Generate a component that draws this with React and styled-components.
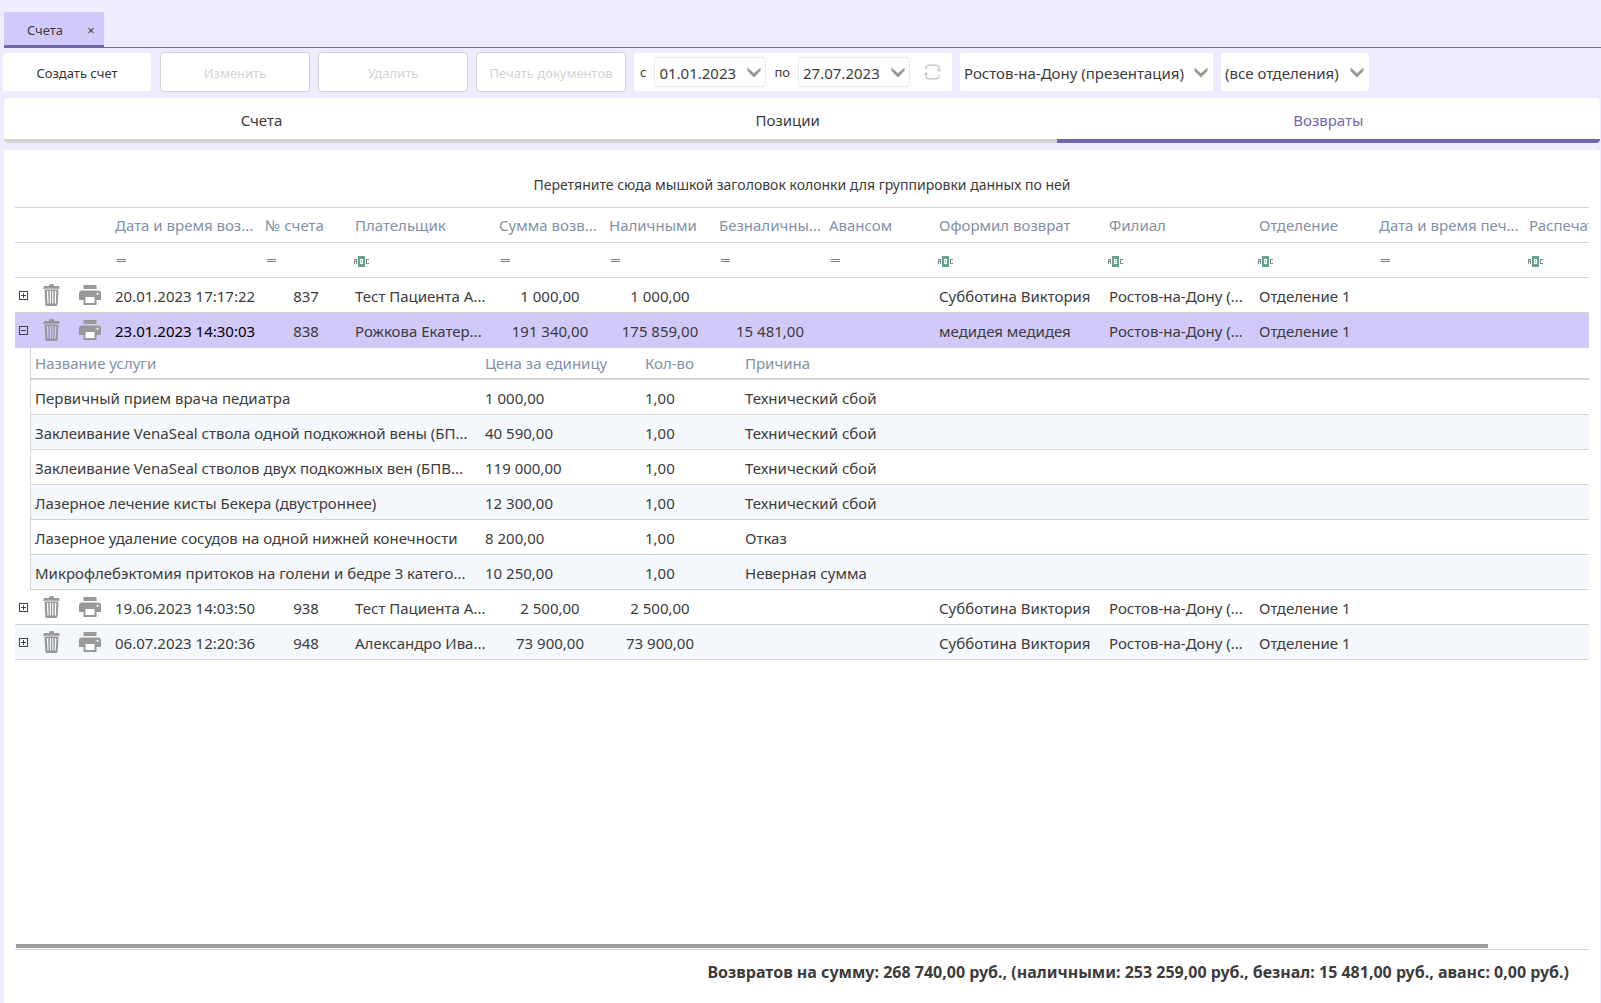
import React, { Fragment, useState } from 'react'
import styled, { createGlobalStyle } from 'styled-components'

const columns = [
    { title: '', label: 'Раскрыть', width: 17 },
    { title: '', label: 'Удаление', width: 38 },
    { title: '', label: 'Печать', width: 40 },
    { title: 'Дата и время воз...', width: 150, filter: 'eq' },
    { title: '№ счета', width: 90, filter: 'eq' },
    { title: 'Плательщик', width: 144, filter: 'abc' },
    { title: 'Сумма возв...', width: 110, filter: 'eq' },
    { title: 'Наличными', width: 110, filter: 'eq' },
    { title: 'Безналичны...', width: 110, filter: 'eq' },
    { title: 'Авансом', width: 110, filter: 'eq' },
    { title: 'Оформил возврат', width: 170, filter: 'abc' },
    { title: 'Филиал', width: 150, filter: 'abc' },
    { title: 'Отделение', width: 120, filter: 'abc' },
    { title: 'Дата и время печ...', width: 150, filter: 'eq' },
    { title: 'Распечатал', width: 174, filter: 'abc' },
]

const refunds = [
    { id: 837, date: '20.01.2023 17:17:22', payer: 'Тест Пациента А...', sum: '1 000,00', cash: '1 000,00', card: '', author: 'Субботина Виктория' },
    { id: 838, date: '23.01.2023 14:30:03', payer: 'Рожкова Екатер...', sum: '191 340,00', cash: '175 859,00', card: '15 481,00', author: 'медидея медидея' },
    { id: 938, date: '19.06.2023 14:03:50', payer: 'Тест Пациента А...', sum: '2 500,00', cash: '2 500,00', card: '', author: 'Субботина Виктория' },
    { id: 948, date: '06.07.2023 12:20:36', payer: 'Александро Ива...', sum: '73 900,00', cash: '73 900,00', card: '', author: 'Субботина Виктория' },
]

const services = [
    ['Первичный прием врача педиатра', '1 000,00', '1,00', 'Технический сбой'],
    ['Заклеивание VenaSeal ствола одной подкожной вены (БП...', '40 590,00', '1,00', 'Технический сбой'],
    ['Заклеивание VenaSeal стволов двух подкожных вен (БПВ...', '119 000,00', '1,00', 'Технический сбой'],
    ['Лазерное лечение кисты Бекера (двустроннее)', '12 300,00', '1,00', 'Технический сбой'],
    ['Лазерное удаление сосудов на одной нижней конечности', '8 200,00', '1,00', 'Отказ'],
    ['Микрофлебэктомия притоков на голени и бедре 3 катего...', '10 250,00', '1,00', 'Неверная сумма'],
]

const Chevron = () => (
    <svg className='chevron' width='14' height='11' viewBox='0 0 14 11' aria-hidden='true'>
        <path d='M0.5 0.5 L7 6.2 L13.5 0.5 V4 L7 10.5 L0.5 4 Z' fill='#999' />
    </svg>
)

const RefreshIcon = () => (
    <svg width='18' height='16' viewBox='0 0 18 16' fill='none' stroke='#cacaca' strokeWidth='1.4' aria-hidden='true'>
        <path d='M2 5.5 V4 Q2 1.2 4.8 1.2 H12.2 Q15 1.2 15 4 V7' />
        <path d='M12.8 5.8 H17.2 L15 7.8 Z' fill='#cacaca' strokeWidth='0.4' />
        <path d='M15 10.5 V12 Q15 14.8 12.2 14.8 H4.8 Q2 14.8 2 12 V9' />
        <path d='M0 10.2 H4.2 L2.1 8.2 Z' fill='#cacaca' strokeWidth='0.4' />
    </svg>
)

const TrashIcon = () => (
    <svg width='17' height='22' viewBox='0 0 17 22' fill='#999' aria-hidden='true'>
        <path d='M6 0.5 Q8.5 -0.4 11 0.5 V2 H16 L17 4.8 H0 L1 2 H6 Z' />
        <path fillRule='evenodd' d='M1.5 5.5 H15.5 L14.7 20.5 Q14.6 22 13 22 H4 Q2.4 22 2.3 20.5 Z M3.9 7 L4.4 19.5 H5.6 L5.2 7 Z M6.9 7 V19.5 H8 V7 Z M9.2 7 V19.5 H10.3 V7 Z M12 7 L11.6 19.5 H12.8 L13.3 7 Z' />
    </svg>
)

const PrinterIcon = () => (
    <svg width='22' height='20' viewBox='0 0 22 20' fill='#999' aria-hidden='true'>
        <path d='M4.5 0 H17.5 V4 H4.5 Z' />
        <path d='M3 5.5 H19 Q22 5.5 22 8.5 V15 H17.5 V20 H4.5 V15 H0 V8.5 Q0 5.5 3 5.5 Z' />
        <rect x='6.5' y='12' width='9' height='6' fill='#fff' />
        <circle cx='18.5' cy='8.8' r='1' fill='#fff' />
    </svg>
)

const ToggleIcon = ({ open }) => (
    <svg width='9' height='9' viewBox='0 0 9 9' fill='none' stroke='#444' shapeRendering='crispEdges' aria-hidden='true'>
        <rect x='0.5' y='0.5' width='8' height='8' />
        <path d={open ? 'M2 4.5 H7' : 'M2 4.5 H7 M4.5 2 V7'} />
    </svg>
)

const EqualsIcon = () => (
    <svg width='9' height='4' viewBox='0 0 9 4' fill='#808080' shapeRendering='crispEdges' aria-hidden='true'>
        <rect width='9' height='1' />
        <rect y='2' width='9' height='1' />
    </svg>
)

// "contains" filter sign, drawn on a 15x11 pixel grid
const ContainsIcon = () => (
    <svg width='15' height='11' viewBox='0 0 15 11' fill='none' shapeRendering='crispEdges' aria-hidden='true'>
        <rect x='4' width='7' height='11' fill='#64a38d' />
        <rect x='6' y='3' width='3' height='5' fill='#fff' />
        <rect x='7' y='4' width='1' height='1' fill='#64a38d' />
        <rect x='7' y='6' width='1' height='1' fill='#64a38d' />
        <path d='M0.5 8 V3.5 H2.5 V8 M0.5 5.5 H2.5' stroke='#888' />
        <path d='M15 3.5 H12.5 V7.5 H15' stroke='#888' />
    </svg>
)

function DetailTable() {
    return (
        <Details>
            <colgroup>
                <col width='450' />
                <col width='160' />
                <col width='100' />
                <col />
            </colgroup>
            <thead>
                <tr>
                    <th>Название услуги</th>
                    <th>Цена за единицу</th>
                    <th>Кол-во</th>
                    <th>Причина</th>
                </tr>
            </thead>
            <tbody>
                {services.map(row => (
                    <tr key={row[0]}>
                        {row.map((cell, i) => <td key={i}>{cell}</td>)}
                    </tr>
                ))}
            </tbody>
        </Details>
    )
}

function App() {
    const [opened, setOpened] = useState(838)
    const [tab, setTab] = useState('Возвраты')
    const [from, setFrom] = useState('01.01.2023')
    const [to, setTo] = useState('27.07.2023')

    return (
        <Page>
            <GlobalStyle />
            <WindowTabs>
                <WindowTab>
                    <a href='#accounts'>Счета</a>
                    <button aria-label='Закрыть вкладку'>×</button>
                </WindowTab>
            </WindowTabs>

            <Toolbar>
                <ToolButton>Создать счет</ToolButton>
                <ToolButton disabled>Изменить</ToolButton>
                <ToolButton disabled>Удалить</ToolButton>
                <ToolButton disabled>Печать документов</ToolButton>
                <Period>
                    <label htmlFor='from'>с</label>
                    <DateBox>
                        <input id='from' value={from} onChange={e => setFrom(e.target.value)} />
                        <Chevron />
                    </DateBox>
                    <label htmlFor='to'>по</label>
                    <DateBox>
                        <input id='to' value={to} onChange={e => setTo(e.target.value)} />
                        <Chevron />
                    </DateBox>
                    <RefreshButton aria-label='Обновить'><RefreshIcon /></RefreshButton>
                </Period>
                <Combo $width={253}>
                    <select aria-label='Филиал'>
                        <option>Ростов-на-Дону (презентация)</option>
                    </select>
                    <Chevron />
                </Combo>
                <Combo $width={148}>
                    <select aria-label='Отделение'>
                        <option>(все отделения)</option>
                    </select>
                    <Chevron />
                </Combo>
            </Toolbar>

            <Sections role='tablist'>
                {['Счета', 'Позиции', 'Возвраты'].map(name => (
                    <SectionTab
                        key={name}
                        role='tab'
                        aria-selected={tab === name}
                        $active={tab === name}
                        onClick={() => setTab(name)}
                    >
                        {name}
                    </SectionTab>
                ))}
            </Sections>

            <Panel>
                <GroupHint>Перетяните сюда мышкой заголовок колонки для группировки данных по ней</GroupHint>
                <Scroller>
                    <Grid>
                        <colgroup>
                            {columns.map((col, i) => <col key={i} width={col.width} />)}
                        </colgroup>
                        <thead>
                            <tr>
                                {columns.map((col, i) => <th key={i} aria-label={col.label}>{col.title}</th>)}
                            </tr>
                            <tr>
                                {columns.map((col, i) => (
                                    <FilterCell key={i} $kind={col.filter}>
                                        {col.filter === 'eq' && <EqualsIcon />}
                                        {col.filter === 'abc' && <ContainsIcon />}
                                    </FilterCell>
                                ))}
                            </tr>
                        </thead>
                        <tbody>
                            {refunds.map((row, i) => (
                                <Fragment key={row.id}>
                                    <Row $selected={row.id === opened} $striped={i % 2 === 1}>
                                        <IconCell>
                                            <IconButton
                                                aria-label='Состав возврата'
                                                aria-expanded={row.id === opened}
                                                onClick={() => setOpened(row.id === opened ? null : row.id)}
                                            >
                                                <ToggleIcon open={row.id === opened} />
                                            </IconButton>
                                        </IconCell>
                                        <IconCell><IconButton aria-label='Удалить возврат'><TrashIcon /></IconButton></IconCell>
                                        <IconCell><IconButton aria-label='Распечатать'><PrinterIcon /></IconButton></IconCell>
                                        <DateCell $selected={row.id === opened}>{row.date}</DateCell>
                                        <NumberCell>{row.id}</NumberCell>
                                        <td>{row.payer}</td>
                                        <NumberCell>{row.sum}</NumberCell>
                                        <NumberCell>{row.cash}</NumberCell>
                                        <NumberCell>{row.card}</NumberCell>
                                        <td></td>
                                        <td>{row.author}</td>
                                        <td>Ростов-на-Дону (...</td>
                                        <td>Отделение 1</td>
                                        <td></td>
                                        <td></td>
                                    </Row>
                                    {row.id === opened && (
                                        <tr>
                                            <DetailCell colSpan={columns.length}><DetailTable /></DetailCell>
                                        </tr>
                                    )}
                                </Fragment>
                            ))}
                        </tbody>
                    </Grid>
                </Scroller>
                <ScrollTrack><ScrollThumb /></ScrollTrack>
                <Totals>
                    Возвратов на сумму: 268 740,00 руб., (наличными: 253 259,00 руб., безнал: 15 481,00 руб., аванс: 0,00 руб.)
                </Totals>
            </Panel>
        </Page>
    )
}

export default App

const GlobalStyle = createGlobalStyle`
    *{
        box-sizing: border-box;
    }

    body{
        margin: 0;
        background: #edebfe;
        color: #3c3c3c;
        font-family: 'Noto Sans', 'Open Sans', sans-serif;
        font-size: 15px;
    }

    button, input, select{
        margin: 0;
        padding: 0;
        border: none;
        background: none;
        color: inherit;
        font: inherit;
    }

    svg{
        display: block;
        flex-shrink: 0;
    }
`

const Page = styled.div`
    min-height: 100vh;
    display: flex;
    flex-direction: column;
    padding: 12px 1px 0 4px;
`

const WindowTabs = styled.div`
    display: flex;
    height: 36px;
    margin-right: -1px;
    box-shadow: inset 0 -1px #7467a9;
`

const WindowTab = styled.div`
    width: 100px;
    display: flex;
    align-items: center;
    justify-content: space-between;
    padding: 2px 8px 0 23px;
    background: #d1c9fa;
    border-bottom: 3px solid #7467a9;
    font-size: 13px;

    a{
        color: inherit;
        text-decoration: none;
    }

    button{
        width: 10px;
        color: #555;
        font-weight: 600;
        line-height: 16px;
    }
`

const Toolbar = styled.div`
    display: flex;
    align-items: center;
    gap: 8px;
    height: 40px;
    margin: 4px 0 6px -2px;
`

const ToolButton = styled.button`
    width: 150px;
    height: 40px;
    padding-top: 1px;
    background: #fff;
    border: 1px solid #edebfe;
    border-radius: 4px;
    color: #333;
    font-size: 13px;
    white-space: nowrap;

    &:disabled{
        border-color: #d3d3d3;
        color: #d3d3d3;
    }
`

const Period = styled.div`
    height: 38px;
    display: flex;
    align-items: center;
    gap: 8px;
    padding: 0 10px 0 6px;
    background: #fff;
    border-radius: 3px;
    font-size: 13px;
`

const DateBox = styled.div`
    width: 112px;
    height: 30px;
    display: flex;
    align-items: center;
    justify-content: space-between;
    padding: 0 4px;
    border: 1px solid #ebebeb;
    border-radius: 3px;

    input{
        width: 84px;
        padding-top: 2px;
        font-size: 15px;
        outline: none;
    }
`

const RefreshButton = styled.button`
    margin-left: 6px;
`

const Combo = styled.div`
    width: ${props => props.$width}px;
    height: 38px;
    display: grid;
    align-items: center;
    background: #fff;
    border-radius: 3px;

    select, .chevron{
        grid-area: 1 / 1;
    }

    select{
        width: 100%;
        height: 38px;
        appearance: none;
        padding: 2px 4px 0;
    }

    .chevron{
        justify-self: end;
        margin-right: 5px;
        pointer-events: none;
    }
`

const Sections = styled.div`
    display: flex;
    height: 45px;
    background: #fff;
    border-radius: 4px;
    overflow: hidden;
`

const SectionTab = styled.button`
    flex: 1 1 auto;
    padding-top: 3px;
    border-bottom: 4px solid ${props => props.$active ? '#7467a9' : '#d3d3d3'};
    color: ${props => props.$active ? '#7467a9' : 'inherit'};
`

const Panel = styled.div`
    flex: 1;
    display: flex;
    flex-direction: column;
    margin-top: 7px;
    padding: 0 11px;
    background: #fff;
    border-radius: 4px 4px 0 0;
`

const GroupHint = styled.div`
    padding: 24px 0 11px;
    font-size: 14px;
    line-height: 22px;
    text-align: center;
`

const Scroller = styled.div`
    flex: 1;
    overflow: hidden;
    border-top: 1px solid #d3d3d3;
`

const Grid = styled.table`
    width: 1683px;
    table-layout: fixed;
    border-collapse: separate;
    border-spacing: 0;

    th, td{
        height: 35px;
        padding: 0 5px;
        border-bottom: 1px solid #d3d3d3;
        overflow: hidden;
        text-align: left;
        white-space: nowrap;
    }

    td{
        padding-top: 2px;
    }

    th{
        color: #8291a8;
        font-weight: 400;
    }
`

const FilterCell = styled.td`
    && {
        padding-left: ${props => props.$kind === 'abc' ? 4 : 7}px;
    }
`

const Row = styled.tr`
    background: ${props => props.$selected ? '#d1c9fa' : props.$striped ? '#f4f7fb' : '#fff'};
`

const IconCell = styled.td`
    && {
        padding: 0;
    }
`

const IconButton = styled.button`
    display: flex;
    margin: 0 auto;
    cursor: pointer;
`

const DateCell = styled.td`
    color: ${props => props.$selected ? '#000' : 'inherit'};
`

const NumberCell = styled.td`
    && {
        padding-left: 7px;
        text-align: center;
    }
`

const DetailCell = styled.td`
    && {
        height: auto;
        padding: 0 0 0 15px;
        border-bottom: none;
    }
`

const Details = styled.table`
    width: 100%;
    table-layout: fixed;
    border-collapse: separate;
    border-spacing: 0;
    border-left: 1px solid #d3d3d3;

    && th{
        height: 32px;
        padding: 0 4px;
        border-bottom-width: 2px;
    }

    && td{
        padding: 2px 4px 0;
    }

    tbody tr:nth-child(even){
        background: #f4f7fb;
    }
`

const ScrollTrack = styled.div`
    padding: 0 0 1px 1px;
    border-bottom: 1px solid #d3d3d3;
`

const ScrollThumb = styled.div`
    width: 93.6%;
    height: 4px;
    background: #9c9c9c;
`

const Totals = styled.div`
    padding: 11px 20px 20px 0;
    font-size: 16px;
    line-height: 22px;
    font-weight: 700;
    text-align: right;
`
